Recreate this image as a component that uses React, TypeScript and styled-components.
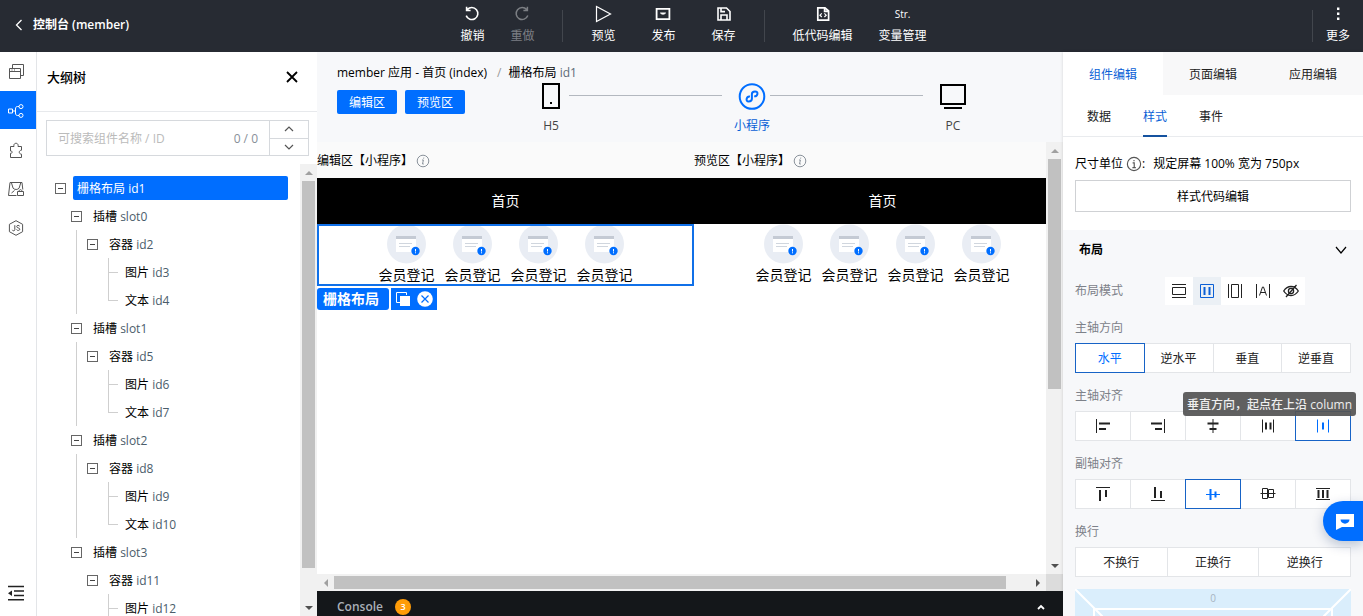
import React from 'react';
import styled, { createGlobalStyle, css } from 'styled-components';

const BLUE = '#006eff';
const ACTIVE = '#0a5fd6';

const GlobalStyle = createGlobalStyle`
  *, *::before, *::after { box-sizing: border-box; }
  body {
    margin: 0;
    font-family: "Open Sans", "Noto Sans CJK SC", sans-serif;
    font-size: 12px;
    line-height: 20px;
    color: #000;
    background: #fff;
  }
  button, input { font: inherit; color: inherit; margin: 0; padding: 0; border: 0; background: none; }
  button { cursor: pointer; }
  ul { list-style: none; margin: 0; padding: 0; }
  h1, h2, h3 { margin: 0; font-size: 12px; line-height: 20px; }
  a { color: inherit; text-decoration: none; }
  svg { display: block; flex: none; }
`;

/* ---------- Page ---------- */

const Page = styled.div`
  display: flex;
  flex-direction: column;
  height: 100vh;
  overflow: hidden;
`;

const Body = styled.div`
  display: flex;
  flex: 1;
  min-height: 0;
`;

/* ---------- Top bar ---------- */

const TopBar = styled.header`
  display: grid;
  grid-template-columns: 1fr auto 1fr;
  align-items: center;
  height: 52px;
  flex: none;
  background: #272b33;
  color: #fff;
`;

const BackLink = styled.a`
  display: flex;
  align-items: center;
  gap: 8px;
  padding: 0 0 2px 13px;
  font-weight: 600;
  white-space: nowrap;
`;

const Tools = styled.div`
  display: flex;
  align-items: center;
  gap: 28px;
  padding-left: 24px;
`;

const ToolGroup = styled.div<{ $gap: number }>`
  display: flex;
  gap: ${p => p.$gap}px;
`;

const Divider = styled.span`
  width: 1px;
  height: 32px;
  background: #42464d;
`;

const ToolButton = styled.button`
  display: flex;
  flex-direction: column;
  align-items: center;
  gap: 3px;
  height: 42px;
  white-space: nowrap;
  &:disabled { color: #7c7f84; cursor: default; }
`;

const ToolIcon = styled.span`
  display: flex;
  align-items: center;
  justify-content: center;
  height: 18px;
  font-size: 10px;
`;

const MoreArea = styled.div`
  display: flex;
  align-items: center;
  justify-self: end;
  gap: 13px;
  padding-right: 13px;
`;

/* ---------- Left rail ---------- */

const Rail = styled.nav`
  display: flex;
  flex-direction: column;
  gap: 1px;
  width: 37px;
  flex: none;
  border-right: 1px solid #e3e5e8;
  padding-bottom: 4px;
`;

const RailButton = styled.button<{ $active?: boolean; $bottom?: boolean }>`
  display: flex;
  align-items: center;
  justify-content: center;
  width: 36px;
  height: 38px;
  padding: 2px 4px 0 0;
  color: ${p => (p.$active ? '#fff' : '#555')};
  background: ${p => (p.$active ? BLUE : 'transparent')};
  ${p => p.$bottom && css`margin-top: auto; padding-top: 0; color: #222;`}
`;

/* ---------- Outline panel ---------- */

const Outline = styled.aside`
  display: flex;
  flex-direction: column;
  width: 280px;
  flex: none;
  background: #fff;
`;

const OutlineHead = styled.div`
  display: flex;
  justify-content: space-between;
  height: 60px;
  flex: none;
  padding: 15px 19px 0 10px;
  border-bottom: 1px solid #e7e9ec;
`;

const OutlineTitle = styled.h2`
  font-size: 13px;
  font-weight: 500;
`;

const IconButton = styled.button`
  display: flex;
  align-items: center;
  justify-content: center;
  height: 20px;
`;

const SearchBox = styled.div`
  display: flex;
  height: 36px;
  flex: none;
  margin: 8px 8px 8px 9px;
  border: 1px solid #d6d9dd;
`;

const SearchLabel = styled.label`
  display: flex;
  flex: 1;
  align-items: center;
  min-width: 0;
  padding: 2px 11px 0;
  color: #888f99;
`;

const SearchInput = styled.input`
  flex: 1;
  min-width: 0;
  height: 20px;
  outline: 0;
  &::placeholder { color: #bbb; }
`;

const Stepper = styled.div`
  display: flex;
  flex-direction: column;
  width: 39px;
  border-left: 1px solid #d6d9dd;
`;

const StepButton = styled.button`
  display: flex;
  flex: 1;
  align-items: center;
  justify-content: center;
  color: #555;
  & + & { border-top: 1px solid #d6d9dd; }
`;

const TreeArea = styled.div`
  display: flex;
  flex: 1;
  min-height: 0;
`;

const Tree = styled.ul`
  flex: 1;
  min-width: 0;
  overflow: hidden;
  padding: 10px 12px 0 18px;
`;

const Row = styled.div`
  display: flex;
  align-items: center;
  gap: 7px;
  height: 28px;
`;

const Toggle = styled.button`
  display: flex;
  align-items: center;
  justify-content: center;
  width: 11px;
  height: 11px;
  border: 1px solid #666;
  &::before { content: ""; width: 5px; height: 1px; background: #444; }
`;

const NodeLabel = styled.span<{ $selected?: boolean }>`
  flex: 1;
  height: 24px;
  padding: 0 4px;
  line-height: 26px;
  border-radius: 2px;
  white-space: nowrap;
  ${p => p.$selected && css`background: ${BLUE}; color: #fff;`}
`;

const NodeId = styled.span<{ $selected?: boolean }>`
  color: ${p => (p.$selected ? '#fff' : '#4b5d6b')};
`;

const SlotItem = styled.li`
  padding-left: 16px;
`;

const SlotChildren = styled.ul<{ $line: boolean }>`
  margin-left: 5px;
  padding-left: 10px;
  border-left: 1px solid ${p => (p.$line ? '#cfcfcf' : 'transparent')};
`;

const LeafList = styled.ul`
  margin-left: 21px;
`;

const Leaf = styled.li<{ $last: boolean }>`
  position: relative;
  padding-left: 13px;
  &::before {
    content: "";
    position: absolute;
    left: 0;
    top: 0;
    width: 1px;
    height: ${p => (p.$last ? '50%' : '100%')};
    background: #cfcfcf;
  }
  &::after {
    content: "";
    position: absolute;
    left: 0;
    top: 50%;
    width: 10px;
    height: 1px;
    background: #cfcfcf;
  }
`;

/* ---------- Scrollbars ---------- */

const VBar = styled.div`
  display: flex;
  flex-direction: column;
  align-items: center;
  width: 17px;
  flex: none;
  background: #f1f1f1;
`;

const HBar = styled.div`
  display: flex;
  align-items: center;
  height: 17px;
  flex: none;
  background: #f1f1f1;
`;

const BarArrow = styled.span`
  display: flex;
  align-items: center;
  justify-content: center;
  width: 17px;
  height: 17px;
  flex: none;
`;

const BarTrack = styled.div<{ $dir: 'row' | 'column' }>`
  display: flex;
  flex-direction: ${p => p.$dir};
  flex: 1;
`;

const Thumb = styled.div<{ $grow: number }>`
  flex: ${p => p.$grow} 0 0;
  min-width: 13px;
  min-height: 13px;
  background: #c1c1c1;
`;

const Rest = styled.div<{ $grow: number }>`
  flex: ${p => p.$grow} 0 0;
`;

const Corner = styled.span`
  width: 17px;
  height: 17px;
  background: #dcdcdc;
`;

/* ---------- Centre ---------- */

const Main = styled.main`
  display: flex;
  flex-direction: column;
  flex: 1;
  min-width: 0;
`;

const MainHead = styled.div`
  height: 90px;
  flex: none;
  padding: 11px 24px 0 20px;
  background: #f7f8fa;
`;

const Crumbs = styled.nav`
  display: flex;
  white-space: nowrap;
`;

const CrumbSlash = styled.span`
  margin: 0 7px 0 10px;
  color: #999;
`;

const Muted = styled.span`
  color: #5d6b78;
`;

const MainTools = styled.div`
  display: flex;
  align-items: flex-start;
`;

const AreaButtons = styled.div`
  display: flex;
  gap: 8px;
  padding-top: 7px;
`;

const PrimaryButton = styled.button`
  width: 60px;
  height: 24px;
  padding-top: 2px;
  border-radius: 2px;
  color: #fff;
  background: ${BLUE};
`;

const Devices = styled.div`
  display: flex;
  flex: 1;
  padding: 0 68px;
`;

const Device = styled.button<{ $active?: boolean }>`
  display: flex;
  flex-direction: column;
  align-items: center;
  gap: 6px;
  width: 36px;
  flex: none;
  white-space: nowrap;
  color: ${p => (p.$active ? ACTIVE : '#444')};
`;

const DeviceLine = styled.span`
  flex: 1;
  height: 1px;
  margin: 12px 12px 0 0;
  background: #b3b8bf;
`;

const CanvasArea = styled.div`
  display: flex;
  flex: 1;
  min-height: 0;
`;

const Canvas = styled.div`
  display: flex;
  flex: 1;
  min-width: 0;
  overflow: hidden;
`;

const Frame = styled.section`
  width: 377px;
  flex: none;
`;

const FrameTitle = styled.h3`
  display: flex;
  align-items: center;
  gap: 3px;
  height: 36px;
  padding-top: 2px;
  font-weight: 400;
  background: #fafafa;
`;

const PhoneBar = styled.div`
  height: 46px;
  line-height: 46px;
  font-size: 14px;
  text-align: center;
  color: #fff;
  background: #000;
`;

const PhoneGrid = styled.div<{ $selected?: boolean }>`
  position: relative;
  display: flex;
  justify-content: center;
  gap: 10px;
  height: 62px;
  ${p => p.$selected && css`
    &::after {
      content: "";
      position: absolute;
      inset: 0;
      border: 2px solid #1070e8;
    }
  `}
`;

const PhoneItem = styled.div`
  display: flex;
  flex-direction: column;
  align-items: center;
  font-size: 14px;
  line-height: 22px;
  white-space: nowrap;
`;

const SelectionBar = styled.div`
  display: flex;
  gap: 2px;
  margin-top: 2px;
  color: #fff;
`;

const SelectionName = styled.span`
  width: 72px;
  height: 22px;
  padding-left: 6px;
  line-height: 22px;
  font-size: 14px;
  font-weight: 700;
  border-radius: 3px;
  background: ${BLUE};
`;

const SelectionTools = styled.div`
  display: flex;
  align-items: center;
  gap: 6px;
  height: 22px;
  padding: 0 4px;
  background: ${BLUE};
`;

const ConsoleBar = styled.footer`
  display: flex;
  align-items: center;
  gap: 12px;
  height: 25px;
  flex: none;
  padding: 6px 18px 0 20px;
  color: #a9b0b8;
  background: #14171a;
  font-weight: 600;
`;

const Badge = styled.span`
  width: 16px;
  height: 16px;
  border-radius: 8px;
  line-height: 16px;
  font-size: 9px;
  text-align: center;
  color: #fff;
  background: #ff9c07;
`;

const ConsoleToggle = styled(IconButton)`
  margin-left: auto;
  color: #fff;
`;

/* ---------- Property panel ---------- */

const Panel = styled.aside`
  display: flex;
  flex-direction: column;
  width: 300px;
  flex: none;
  overflow: hidden;
  box-shadow: 0 0 3px rgba(0, 0, 0, 0.15);
`;

const Tabs = styled.div`
  display: flex;
  flex: none;
`;

const Tab = styled.button<{ $active?: boolean }>`
  flex: 1;
  height: 43px;
  padding-top: 2px;
  color: ${p => (p.$active ? ACTIVE : '#222')};
  background: ${p => (p.$active ? '#fff' : '#f8f8f9')};
`;

const SubTabs = styled.div`
  display: flex;
  flex: none;
  gap: 32px;
  padding-left: 24px;
  border-bottom: 1px solid #e9ebee;
`;

const SubTab = styled.button<{ $active?: boolean }>`
  height: 42px;
  margin-bottom: -1px;
  padding-top: 4px;
  border-bottom: 2px solid ${p => (p.$active ? '#15529f' : 'transparent')};
  color: ${p => (p.$active ? ACTIVE : '#222')};
`;

const UnitSection = styled.div`
  flex: none;
  padding: 17px 12px 18px;
`;

const UnitRow = styled.div`
  display: flex;
  align-items: center;
  margin-bottom: 6px;
`;

const UnitName = styled.span`
  margin-right: 3px;
`;

const UnitValue = styled.span`
  margin-left: 8px;
`;

const CodeButton = styled.button`
  width: 100%;
  height: 32px;
  padding-top: 1px;
  border: 1px solid #cfd1d4;
  background: #fff;
`;

const LayoutSection = styled.section`
  flex: 1;
  padding: 0 12px;
  background: #f7f8fa;
`;

const SectionHead = styled.div`
  display: flex;
  align-items: center;
  justify-content: space-between;
  height: 40px;
  margin-bottom: 7px;
  padding: 0 4px;
`;

const ModeRow = styled.div`
  display: flex;
  align-items: center;
  gap: 42px;
  color: #7d8189;
`;

const ModeGroup = styled.div`
  display: flex;
  background: #fff;
`;

const ModeButton = styled.button<{ $active?: boolean }>`
  display: flex;
  align-items: center;
  justify-content: center;
  width: 28px;
  height: 28px;
  color: ${p => (p.$active ? ACTIVE : '#222')};
  background: ${p => (p.$active ? '#ebf0f5' : '#fff')};
`;

const Field = styled.div`
  position: relative;
  margin-top: 6px;
`;

const FieldLabel = styled.div`
  height: 32px;
  line-height: 34px;
  color: #7d8189;
`;

const Segments = styled.div`
  display: flex;
`;

const Segment = styled.button<{ $active?: boolean; $text?: boolean }>`
  display: flex;
  flex: 1;
  align-items: center;
  justify-content: center;
  height: 30px;
  margin-right: -1px;
  padding-top: ${p => (p.$text ? 2 : 0)}px;
  border: 1px solid #e3e5e8;
  background: #fff;
  color: #222;
  &:last-child { margin-right: 0; }
  ${p => p.$active && css`
    z-index: 1;
    border-color: #1763c6;
    color: ${BLUE};
  `}
`;

const Tooltip = styled.div`
  position: absolute;
  right: -5px;
  top: 81px;
  z-index: 2;
  height: 24px;
  padding: 0 4px;
  line-height: 26px;
  font-weight: 500;
  white-space: nowrap;
  border-radius: 3px;
  color: #eee;
  background: rgba(84, 84, 84, 0.93);
`;

const BoxModel = styled.div`
  position: relative;
  margin-top: 12px;
  height: 120px;
  padding: 0 18px 18px;
  text-align: center;
  color: #a7b4bf;
  font-size: 10px;
  line-height: 19px;
  background: #daeefc;
`;

const BoxInner = styled.div`
  height: 80px;
  border: 2px solid #fff;
`;

const BoxCorner = styled.svg<{ $right?: boolean }>`
  position: absolute;
  top: 0;
  ${p => (p.$right ? 'right: 0;' : 'left: 0;')}
`;

const ChatButton = styled.button`
  position: fixed;
  right: 0;
  bottom: 75px;
  z-index: 3;
  display: flex;
  align-items: center;
  width: 40px;
  height: 40px;
  padding-left: 12px;
  border-radius: 20px 0 0 20px;
  background: ${BLUE};
  box-shadow: 0 4px 12px rgba(0, 40, 100, 0.25);
`;

/* ---------- Icons ---------- */

type IconProps = { w?: number; h?: number; sw?: number; children: React.ReactNode };

const Icon = ({ w = 16, h = 16, sw = 1, children }: IconProps) => (
  <svg width={w} height={h} viewBox={`0 0 ${w} ${h}`} fill="none" stroke="currentColor" strokeWidth={sw} aria-hidden="true">
    {children}
  </svg>
);

const InfoIcon = ({ size, color, italic }: { size: number; color: string; italic?: boolean }) => (
  <svg width={size} height={size} viewBox="0 0 14 14" fill="none" stroke={color} aria-hidden="true">
    <circle cx="7" cy="7" r="5.8" />
    {italic ? <path d="M6 6h1.4l-.9 4h1.3M7.8 3.6l-.2 1" /> : <path d="M5.8 6h1.4v4.2M5.6 10.2h3M7 3.4v1.2" />}
  </svg>
);

const Arrow = ({ dir, dark }: { dir: 'up' | 'down' | 'left' | 'right'; dark?: boolean }) => {
  const d = { up: 'M0 6l4-4 4 4z', down: 'M0 2h8l-4 4z', left: 'M6 0v8l-4-4z', right: 'M2 0l4 4-4 4z' }[dir];
  return (
    <svg width="8" height="8" viewBox="0 0 8 8" fill={dark ? '#505050' : '#a0a0a0'} aria-hidden="true"><path d={d} /></svg>
  );
};

const UndoIcon = () => <Icon sw={1.6}><path d="M3.300 3.600A6 6 0 1 1 2.200 9.600M2.600 .8v3.700h4" /></Icon>;
const RedoIcon = () => <Icon sw={1.5}><path d="M12.700 3.600A6 6 0 1 0 13.800 9.600M13.400 .8v3.700h-4" /></Icon>;
const PlayIcon = () => <Icon w={18} h={18} sw={1.2}><path d="M2.5 1.5v15l14-7.5z" /></Icon>;
const PublishIcon = () => <Icon sw={1.8}><path d="M1.6 2.9h12.8v10.2H1.6z" /><path d="M5.500 7c1 1.500 4 1.500 5 0z" fill="currentColor" strokeWidth="1" /></Icon>;
const SaveIcon = () => <Icon sw={1.6}><path d="M2 2h8.5L14 5.5V14H2zM5 14V9h6v5M5 2v3.6h4" /></Icon>;
const CodeIcon = () => <Icon sw={1.7}><path d="M2.800 1.800h7.200L13.600 5v9.200H2.800zM9.600 2v3.400h3.600" /><path d="M6.8 7.4L5 9.2l1.8 1.8M9.4 7.4l1.800 1.800-1.800 1.800" strokeWidth="1.2" /></Icon>;
const MoreIcon = () => <Icon><g fill="currentColor" stroke="none"><path d="M7 1.500h2.400v2.400H7zM7 6.500h2.400v2.400H7zM7 11.500h2.400v2.400H7z" /></g></Icon>;

const PagesIcon = () => <Icon><path d="M1.5 4.5h11v10h-11zM1.5 7.5h11M4.5 4V.5h11v11H13M3.5 6h1M6 6h1" /></Icon>;
const TreeIcon = () => <Icon><path d="M.5 6h4v4h-4zM4.5 8h3M11 3.5H9.5C8 3.5 7.5 4.5 7.5 6v4c0 1.500.5 2.500 2 2.500H11" /><circle cx="13" cy="3.600" r="2" /><circle cx="13" cy="12.400" r="2" /></Icon>;
const PuzzleIcon = () => <Icon><path d="M2.500 15.500v-4.200c2 .4 2.400-2.600 0-2.300V4.500H6C4.800.2 11.200.2 10 4.500h3.500v3.700c-3 .2-3 3.800 0 4v3.300z" /></Icon>;
const AssetIcon = () => <Icon><path d="M8.500 14.500h-8l1.500-13h12l.8 7M3.500 2l1.600 5.200c1.500 1.700 4.500 1.700 6 0L12.700 2M3.500 12l3-2.500M9.500 10.500h6v4h-6zM11 10.500c0-2.500 3-2.500 3 0" /></Icon>;
const JsIcon = () => <Icon><path d="M8 .7l6.600 3.600v7.400L8 15.300l-6.600-3.600V4.300zM6.800 5.200v4.500c0 1.500-2.200 1.500-2.500.1M11.700 6.200c-.6-1.300-3-1-3 .4 0 1.600 3.100 1 3.100 2.600 0 1.500-2.700 1.700-3.300.3" /></Icon>;
const IndentIcon = () => <Icon w={18} h={16} sw={1.600}><path d="M1 1.500h16M7 6h10M7 10.500h10M1 14.700h16" /><path d="M1 8.200l4-2.800v5.600z" fill="currentColor" stroke="none" /></Icon>;
const CloseIcon = () => <Icon w={12} h={12} sw={1.800}><path d="M1 1l10 10M11 1L1 11" /></Icon>;
const ChevUp = () => <Icon w={10} h={6} sw={1.200}><path d="M1 5l4-4 4 4" /></Icon>;
const ChevDown = () => <Icon w={10} h={6} sw={1.200}><path d="M1 1l4 4 4-4" /></Icon>;

const PhoneIcon = () => <svg width="26" height="27" viewBox="0 0 26 27" aria-hidden="true"><path d="M5 1h16v24H5z" fill="none" stroke="#000" strokeWidth="2" /><path d="M12 19h2v2h-2z" /></svg>;
const MiniIcon = () => (
  <svg width="28" height="27" viewBox="0 0 28 27" fill="none" stroke={BLUE} strokeWidth="2" aria-hidden="true">
    <circle cx="14" cy="13.500" r="12.300" />
    <path d="M12 13.600c-3.600-.6-4.800 4.900-1.400 4.900 1.900 0 3.300-1 3.300-2.700v-4.700c0-1.700 1.300-2.700 3.100-2.700 4 0 2.700 5.300-.8 4.900" />
  </svg>
);
const PcIcon = () => <svg width="26" height="27" viewBox="0 0 26 27" fill="none" stroke="#000" strokeWidth="2" aria-hidden="true"><path d="M1 2h24v19H1zM4 25h18" /></svg>;

const CardIcon = () => (
  <svg width="40" height="40" viewBox="0 0 40 40" aria-hidden="true">
    <circle cx="19.500" cy="20" r="19.500" fill="#e9edf4" />
    <path d="M9 14h20v14H9z" fill="#fff" />
    <path d="M9 12h20v3H9z" fill="#c4cad4" />
    <path d="M12 19.500h13M12 22.500h11" stroke="#d0d6de" />
    <circle cx="28.500" cy="27" r="4.200" fill={BLUE} />
    <path d="M28.500 25v2.500M28.500 28.300v1" stroke="#fff" />
  </svg>
);

const modeIcons = [
  <path key="m" d="M1 1.500h14M1 14.500h14M1.500 4.500h13v7h-13z" />,
  <g key="m"><path d="M1.500 1.500h13v13h-13z" /><path d="M5.500 4v8M10.500 4v8" strokeWidth="2" /></g>,
  <path key="m" d="M1.500 1v14M14.500 1v14M4.500 1.500h7v13h-7z" />,
  <path key="m" d="M1.500 1v14M14.500 1v14M4.500 12.500L7.500 4h1l3 8.500M5.700 9.500h4.600" />,
  <g key="m" strokeWidth="1.300"><path d="M.7 8C4.500 2 11.500 2 15.300 8 11.500 14 4.500 14 .7 8zM13.500 2L3 14" /><circle cx="8" cy="8" r="2.600" /></g>,
];

const mainIcons = [
  <g key="a"><path d="M1.500 1v14" /><path d="M4 5.500h11M4 11h7" strokeWidth="2" /></g>,
  <g key="a"><path d="M14.500 1v14" /><path d="M1 5.500h11M5 11h7" strokeWidth="2" /></g>,
  <g key="a"><path d="M8 1v14" /><path d="M2.500 5.500h11M4.500 11h7" strokeWidth="2" /></g>,
  <g key="a"><path d="M2.500 1.500v13M13.500 1.500v13" /><path d="M6 4.500v7M10.500 4.500v7" strokeWidth="2" /></g>,
  <g key="a"><path d="M2.500 1.500v13M13.500 1.500v13" /><path d="M8 4.500v7" strokeWidth="2" /></g>,
];

const crossIcons = [
  <g key="c"><path d="M1 1.500h14" /><path d="M5 4v11M11 4v7" strokeWidth="2" /></g>,
  <g key="c"><path d="M1 14.500h14" /><path d="M5 1v11M11 5v7" strokeWidth="2" /></g>,
  <g key="c"><path d="M1 8.500h14" /><path d="M5.500 3v11M10.500 5.500v6" strokeWidth="2" /></g>,
  <path key="c" d="M.500 7.500h15M2.500 2.500h5v10h-5zM8.500 3.500h5v8h-5z" />,
  <g key="c"><path d="M1 2.500h14M1 13.500h14" /><path d="M3.500 4v8M8 4v8M12.500 4v8" strokeWidth="2" /></g>,
];

/* ---------- Data ---------- */

const slots = [
  { id: 'slot0', box: 'id2', leaves: [['图片', 'id3'], ['文本', 'id4']], open: false },
  { id: 'slot1', box: 'id5', leaves: [['图片', 'id6'], ['文本', 'id7']], open: false },
  { id: 'slot2', box: 'id8', leaves: [['图片', 'id9'], ['文本', 'id10']], open: false },
  { id: 'slot3', box: 'id11', leaves: [['图片', 'id12']], open: true },
];

/* ---------- Parts ---------- */

const Tool = ({ icon, label, disabled }: { icon: React.ReactNode; label: string; disabled?: boolean }) => (
  <ToolButton disabled={disabled}>
    <ToolIcon>{icon}</ToolIcon>
    {label}
  </ToolButton>
);

const TreeNode = ({ name, id, selected }: { name: string; id: string; selected?: boolean }) => (
  <Row>
    <Toggle aria-label={`折叠 ${id}`} />
    <NodeLabel $selected={selected}>{name} <NodeId $selected={selected}>{id}</NodeId></NodeLabel>
  </Row>
);

const PhoneFrame = ({ title, selected }: { title: string; selected?: boolean }) => (
  <Frame>
    <FrameTitle>{title}<InfoIcon size={14} color="#8a929b" italic /></FrameTitle>
    <PhoneBar>首页</PhoneBar>
    <PhoneGrid $selected={selected}>
      {[0, 1, 2, 3].map(i => <PhoneItem key={i}><CardIcon />会员登记</PhoneItem>)}
    </PhoneGrid>
    {selected && (
      <SelectionBar>
        <SelectionName>栅格布局</SelectionName>
        <SelectionTools>
          <IconButton aria-label="复制">
            <svg width="16" height="16" viewBox="0 0 16 16" aria-hidden="true"><path d="M1.500 11.500v-10h10" fill="none" stroke="#fff" /><path d="M1.500 11.500H5M11.500 1.500V4" stroke="#fff" /><path d="M5 5h10v10H5z" fill="#fff" /></svg>
          </IconButton>
          <IconButton aria-label="删除">
            <svg width="16" height="16" viewBox="0 0 16 16" aria-hidden="true"><circle cx="8" cy="8" r="7.800" fill="#fff" /><path d="M4.500 4.500l7 7M11.500 4.500l-7 7" stroke={BLUE} strokeWidth="1.200" /></svg>
          </IconButton>
        </SelectionTools>
      </SelectionBar>
    )}
  </Frame>
);

const SegmentField = ({ label, items, active, tip }: { label: string; items: React.ReactNode[]; active?: number; tip?: string }) => (
  <Field role="group" aria-label={label}>
    <FieldLabel>{label}</FieldLabel>
    <Segments>
      {items.map((item, i) => (
        <Segment key={i} $active={i === active} $text={typeof item === 'string'}>
          {typeof item === 'string' ? item : <Icon>{item}</Icon>}
        </Segment>
      ))}
    </Segments>
    {tip && <Tooltip role="tooltip">{tip}</Tooltip>}
  </Field>
);

export default function App() {
  return (
    <Page>
      <GlobalStyle />
      <TopBar>
        <BackLink href="#"><Icon w={12} h={12} sw={1.300}><path d="M8.500 1l-5 5 5 5" /></Icon>控制台 (member)</BackLink>
        <Tools>
          <ToolGroup $gap={26}>
            <Tool icon={<UndoIcon />} label="撤销" />
            <Tool icon={<RedoIcon />} label="重做" disabled />
          </ToolGroup>
          <Divider />
          <ToolGroup $gap={36}>
            <Tool icon={<PlayIcon />} label="预览" />
            <Tool icon={<PublishIcon />} label="发布" />
            <Tool icon={<SaveIcon />} label="保存" />
          </ToolGroup>
          <Divider />
          <ToolGroup $gap={26}>
            <Tool icon={<CodeIcon />} label="低代码编辑" />
            <Tool icon="Str." label="变量管理" />
          </ToolGroup>
        </Tools>
        <MoreArea>
          <Divider />
          <Tool icon={<MoreIcon />} label="更多" />
        </MoreArea>
      </TopBar>

      <Body>
        <Rail>
          <RailButton aria-label="页面"><PagesIcon /></RailButton>
          <RailButton aria-label="大纲树" $active><TreeIcon /></RailButton>
          <RailButton aria-label="组件"><PuzzleIcon /></RailButton>
          <RailButton aria-label="素材"><AssetIcon /></RailButton>
          <RailButton aria-label="脚本"><JsIcon /></RailButton>
          <RailButton aria-label="展开" $bottom><IndentIcon /></RailButton>
        </Rail>

        <Outline>
          <OutlineHead>
            <OutlineTitle>大纲树</OutlineTitle>
            <IconButton aria-label="关闭"><CloseIcon /></IconButton>
          </OutlineHead>
          <SearchBox>
            <SearchLabel>
              <SearchInput placeholder="可搜索组件名称 / ID" />
              0 / 0
            </SearchLabel>
            <Stepper>
              <StepButton aria-label="上一个"><ChevUp /></StepButton>
              <StepButton aria-label="下一个"><ChevDown /></StepButton>
            </Stepper>
          </SearchBox>
          <TreeArea>
            <Tree>
              <li>
                <TreeNode name="栅格布局" id="id1" selected />
                <ul>
                  {slots.map(slot => (
                    <SlotItem key={slot.id}>
                      <TreeNode name="插槽" id={slot.id} />
                      <SlotChildren $line={!slot.open}>
                        <li>
                          <TreeNode name="容器" id={slot.box} />
                          <LeafList>
                            {slot.leaves.map(([name, id], i) => (
                              <Leaf key={id} $last={!slot.open && i === slot.leaves.length - 1}>
                                <Row><NodeLabel>{name} <NodeId>{id}</NodeId></NodeLabel></Row>
                              </Leaf>
                            ))}
                          </LeafList>
                        </li>
                      </SlotChildren>
                    </SlotItem>
                  ))}
                </ul>
              </li>
            </Tree>
            <VBar>
              <BarArrow><Arrow dir="up" /></BarArrow>
              <BarTrack $dir="column"><Thumb $grow={387} /><Rest $grow={31} /></BarTrack>
              <BarArrow><Arrow dir="down" dark /></BarArrow>
            </VBar>
          </TreeArea>
        </Outline>

        <Main>
          <MainHead>
            <Crumbs>
              <span>member 应用 - 首页 (index)</span>
              <CrumbSlash>/</CrumbSlash>
              <span>栅格布局 <Muted>id1</Muted></span>
            </Crumbs>
            <MainTools>
              <AreaButtons>
                <PrimaryButton>编辑区</PrimaryButton>
                <PrimaryButton>预览区</PrimaryButton>
              </AreaButtons>
              <Devices>
                <Device><PhoneIcon />H5</Device>
                <DeviceLine />
                <Device $active><MiniIcon />小程序</Device>
                <DeviceLine />
                <Device><PcIcon />PC</Device>
              </Devices>
            </MainTools>
          </MainHead>
          <CanvasArea>
            <Canvas>
              <PhoneFrame title="编辑区【小程序】" selected />
              <PhoneFrame title="预览区【小程序】" />
            </Canvas>
            <VBar>
              <BarArrow><Arrow dir="up" /></BarArrow>
              <BarTrack $dir="column"><Thumb $grow={230} /><Rest $grow={168} /></BarTrack>
              <BarArrow><Arrow dir="down" dark /></BarArrow>
            </VBar>
          </CanvasArea>
          <HBar>
            <BarArrow><Arrow dir="left" /></BarArrow>
            <BarTrack $dir="row"><Thumb $grow={672} /><Rest $grow={23} /></BarTrack>
            <BarArrow><Arrow dir="right" dark /></BarArrow>
            <Corner />
          </HBar>
          <ConsoleBar>
            Console
            <Badge>3</Badge>
            <ConsoleToggle aria-label="展开控制台"><Icon w={8} h={6} sw={1.800}><path d="M1 5l3-3 3 3" /></Icon></ConsoleToggle>
          </ConsoleBar>
        </Main>

        <Panel>
          <Tabs>
            <Tab $active>组件编辑</Tab>
            <Tab>页面编辑</Tab>
            <Tab>应用编辑</Tab>
          </Tabs>
          <SubTabs>
            <SubTab>数据</SubTab>
            <SubTab $active>样式</SubTab>
            <SubTab>事件</SubTab>
          </SubTabs>
          <UnitSection>
            <UnitRow>
              <UnitName>尺寸单位</UnitName>
              <InfoIcon size={16} color="#555" />:
              <UnitValue>规定屏幕 100% 宽为 750px</UnitValue>
            </UnitRow>
            <CodeButton>样式代码编辑</CodeButton>
          </UnitSection>
          <LayoutSection>
            <SectionHead>
              <h3>布局</h3>
              <IconButton aria-label="收起布局"><Icon w={12} h={8} sw={1.200}><path d="M1 1l5 6 5-6" /></Icon></IconButton>
            </SectionHead>
            <ModeRow>
              布局模式
              <ModeGroup>
                {modeIcons.map((icon, i) => (
                  <ModeButton key={i} $active={i === 1} aria-label={`布局模式 ${i + 1}`}><Icon>{icon}</Icon></ModeButton>
                ))}
              </ModeGroup>
            </ModeRow>
            <SegmentField label="主轴方向" items={['水平', '逆水平', '垂直', '逆垂直']} active={0} tip="垂直方向，起点在上沿 column" />
            <SegmentField label="主轴对齐" items={mainIcons} active={4} />
            <SegmentField label="副轴对齐" items={crossIcons} active={2} />
            <SegmentField label="换行" items={['不换行', '正换行', '逆换行']} />
            <BoxModel>
              0
              <BoxInner />
              <BoxCorner width="28" height="28" viewBox="0 0 28 28" stroke="#fff" strokeWidth="2"><path d="M0 0l28 28" /></BoxCorner>
              <BoxCorner $right width="28" height="28" viewBox="0 0 28 28" stroke="#fff" strokeWidth="2"><path d="M28 0L0 28" /></BoxCorner>
            </BoxModel>
          </LayoutSection>
        </Panel>
      </Body>

      <ChatButton aria-label="在线咨询">
        <svg width="20" height="20" viewBox="0 0 20 20" aria-hidden="true"><path d="M1 3h18v13H7l-6 3z" fill="#fff" /><path d="M5.500 8.500c0 5.500 9 5.500 9 0z" fill={BLUE} /></svg>
      </ChatButton>
    </Page>
  );
}
